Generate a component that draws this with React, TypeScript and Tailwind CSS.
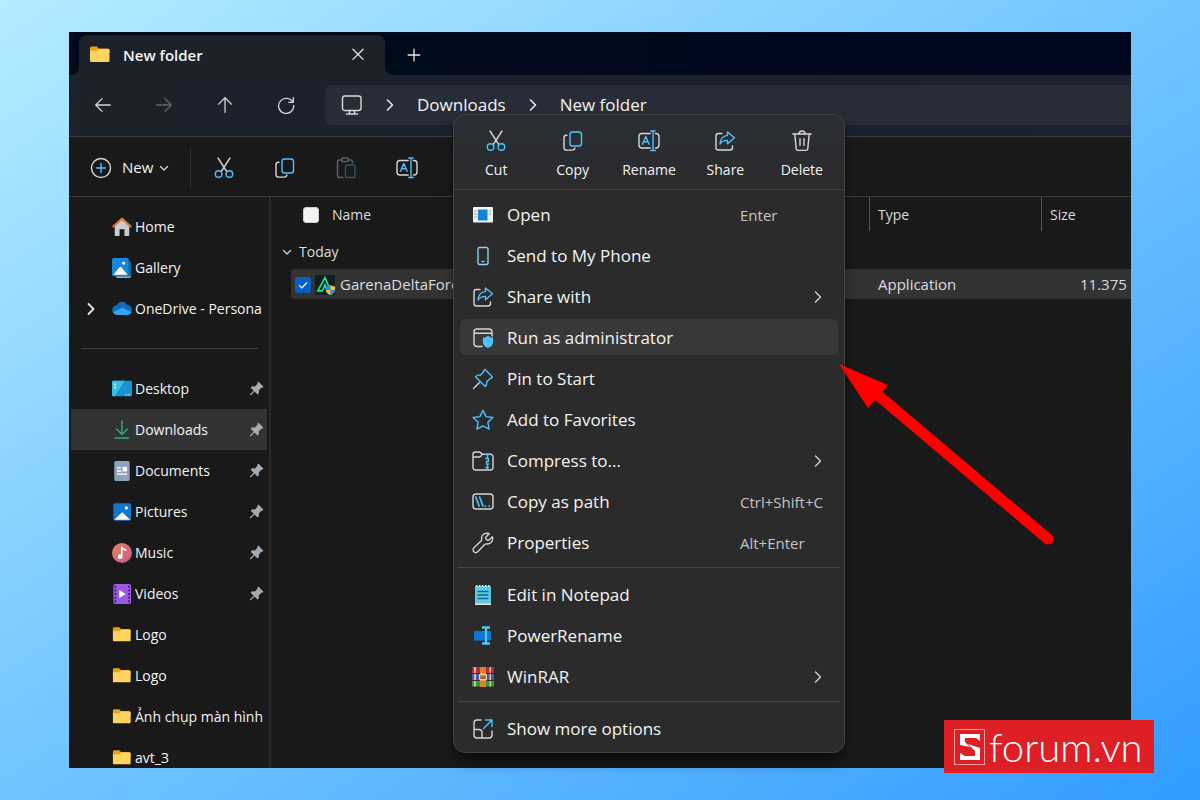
import type { ReactNode } from "react"

const BLUE = "#4cc2ff"

function Svg({ size = 22, children }: { size?: number; children: ReactNode }) {
  return (
    <svg
      width={size}
      height={size}
      viewBox="0 0 22 22"
      fill="none"
      stroke="#d6d6d6"
      strokeWidth="1.4"
      strokeLinecap="round"
      strokeLinejoin="round"
      className="shrink-0"
      aria-hidden="true"
    >
      {children}
    </svg>
  )
}

/* Line icons */

const CutIcon = () => (
  <Svg>
    <path d="M5 1l8.800 13.600M17 1L8.200 14.600" />
    <circle cx="5.600" cy="17" r="3.300" stroke={BLUE} />
    <circle cx="16.400" cy="17" r="3.300" stroke={BLUE} />
  </Svg>
)

const CopyIcon = () => (
  <Svg>
    <path d="M5 5.300H4.400A2.600 2.600 0 0 0 2 8v9.400a2.700 2.700 0 0 0 2.700 2.700h5.600a2.700 2.700 0 0 0 2.600-2.100" />
    <rect x="8" y="2" width="11.500" height="14" rx="2.500" stroke={BLUE} />
  </Svg>
)

const PasteIcon = () => (
  <Svg>
    <g stroke="#636363">
      <path d="M6.500 3H4a1.500 1.500 0 0 0-1.500 1.500v14.500A1.500 1.500 0 0 0 4 20.500h4M13.500 3H16a1.500 1.500 0 0 1 1.500 1.500v1" />
      <rect x="6.500" y="1" width="7" height="3.600" rx="1.800" />
    </g>
    <rect x="10.500" y="8" width="9.500" height="12.500" rx="1.500" stroke="#2c566b" />
  </Svg>
)

const RenameIcon = () => (
  <Svg>
    <path d="M12.200 3.500H4A3 3 0 0 0 1 6.500v8.500a3 3 0 0 0 3 3h8.200M17.500 3.500h.5a3 3 0 0 1 3 3v8.500a3 3 0 0 1-3 3h-.5" />
    <g stroke={BLUE}>
      <path d="M4.500 14.300L7.800 6.500l3.300 7.800M5.600 11.800h4.400" />
      <path d="M12.800 1h4.400M15 1v19.500M12.800 20.500h4.400" />
    </g>
  </Svg>
)

const ShareIcon = () => (
  <Svg>
    <path d="M8 3.500H4.500a2.500 2.500 0 0 0-2.500 2.500v11.500A2.500 2.500 0 0 0 4.500 20h11.500a2.500 2.500 0 0 0 2.500-2.500V16" />
    <path
      d="M13.500 2l7 5.800-7 5.900v-3.300c-3.500 0-5.700 1-7.500 3.600.4-4.700 3-8.100 7.500-8.600z"
      stroke={BLUE}
    />
  </Svg>
)

const TrashIcon = () => (
  <Svg>
    <path d="M1.800 4h18.400M8 4a3 3 0 0 1 6 0M3.800 4l1.400 14.600a2 2 0 0 0 2 1.800h7.600a2 2 0 0 0 2-1.800L18.200 4M9 8.800v6.400M13 8.800v6.400" />
  </Svg>
)

const PhoneIcon = () => (
  <Svg>
    <rect x="6" y="2.500" width="10" height="17" rx="1.800" stroke="#8fd0ea" />
    <path d="M9.800 16.500h2.400" stroke={BLUE} />
  </Svg>
)

const AdminIcon = () => (
  <Svg>
    <path d="M10 19.500H5a3 3 0 0 1-3-3V5a3 3 0 0 1 3-3h12a3 3 0 0 1 3 3v4M2 6.200h18" />
    <path
      d="M16 8.800c1.500 1.300 3.200 1.900 5.200 2v4c0 3-2 5-5.200 6.300-3.200-1.300-5.200-3.300-5.200-6.300v-4c2-.1 3.700-.7 5.200-2z"
      fill={BLUE}
      stroke="none"
    />
  </Svg>
)

const PinIcon = () => (
  <Svg>
    <path d="M7.300 14.700L1.500 20.500" />
    <path
      d="M13 1.500l7.500 7.500c-.4 1-1.300 1.500-2.500 1.600l-3.200 3.200c.2 1.900-.3 3.500-1.600 4.700L3.500 8.800c1.200-1.300 2.800-1.800 4.700-1.600L11.400 4c.1-1.200.6-2.100 1.600-2.500z"
      stroke={BLUE}
    />
  </Svg>
)

const StarIcon = () => (
  <Svg>
    <path
      d="M11 1.300l3 6.300 6.900.9-5 4.800 1.200 6.900-6.100-3.300-6.100 3.300 1.200-6.900-5-4.800 6.900-.9z"
      stroke={BLUE}
    />
  </Svg>
)

const CompressIcon = () => (
  <Svg>
    <path d="M1 7V4.500A2.500 2.500 0 0 1 3.500 2h3.300c1 0 1.700.4 2.200 1l1 1.200h8.500A2.500 2.500 0 0 1 21 6.700v10.800a2.500 2.500 0 0 1-2.500 2.500h-15A2.500 2.500 0 0 1 1 17.500zM1 7h6.500c1.200 0 1.700-.7 2.500-2.800" />
    <path d="M13.500 4.500h4M15.500 4.500v3M13.700 8.500h2.800v2.800h-2v2.700h2.200M15.500 14v3M13.700 17.500h2.800M15.500 17.500V20" stroke={BLUE} />
  </Svg>
)

const PathIcon = () => (
  <Svg>
    <rect x="1" y="3" width="20" height="15" rx="3" />
    <path d="M3.800 6l3.400 9M7.600 6L11 15M13.300 15h.3M17 15h.3" stroke={BLUE} strokeWidth="1.700" />
  </Svg>
)

const WrenchIcon = () => (
  <Svg>
    <path d="M15 1.200c-3.300-.2-6 2.700-5.300 6.200.1.500-.1 1-.4 1.300L2 15.800c-1.200 1.200-1.200 2.900-.1 4 1.100 1 2.900 1 4-.2l7-7.300c.4-.4.9-.5 1.400-.4 3.700.6 6.800-2.300 6.400-6.200l-.4-1-3.300 3.200c-.6.600-1.400.5-1.900 0l-1.100-1.100c-.5-.5-.5-1.300 0-1.900l3.200-3.200z" />
  </Svg>
)

const MoreIcon = () => (
  <Svg>
    <path d="M9 2H5a3 3 0 0 0-3 3v12a3 3 0 0 0 3 3h12a3 3 0 0 0 3-3v-4M2 11.500h5a3 3 0 0 1 3 3V20" />
    <path d="M13.500 2H20v6.500M20 2l-8.500 8.500" stroke={BLUE} />
  </Svg>
)

const Chevron = ({ dir, color = "#d6d6d6", width = 1.3 }: { dir: "right" | "down"; color?: string; width?: number }) => (
  <svg
    width="10"
    height="14"
    viewBox="0 0 10 14"
    fill="none"
    stroke={color}
    strokeWidth={width}
    strokeLinecap="round"
    strokeLinejoin="round"
    className="shrink-0"
    aria-hidden="true"
  >
    <path d={dir === "right" ? "M2.500 2L7.500 7l-5 5" : "M1.500 5.500L5 9l3.500-3.500"} />
  </svg>
)

/* Filled icons */

const FolderIcon = () => (
  <Svg>
    <path d="M1 4A1.500 1.500 0 0 1 2.500 2.500h5.300l2 2H18.500A2 2 0 0 1 20.500 6.500V9H1z" fill="#e8a317" stroke="none" />
    <path d="M1 6.800h7.500L10 5h9.200a1.300 1.300 0 0 1 1.300 1.300v10.400a1.300 1.300 0 0 1-1.300 1.300H2.300A1.300 1.300 0 0 1 1 16.700z" fill="#ffd45e" stroke="none" />
  </Svg>
)

const HomeIcon = () => (
  <Svg>
    <path d="M3 9.500L11 2.500l8 7v10.300a1.200 1.200 0 0 1-1.200 1.200h-4.100v-7.500H8.300V21H4.200A1.200 1.200 0 0 1 3 19.800z" fill="#c9cbce" stroke="none" />
    <path d="M1.500 10.500L11 1.800l9.500 8.700" stroke="#e0762f" strokeWidth="2.400" />
  </Svg>
)

const GalleryIcon = () => (
  <Svg>
    <path d="M19 4a2 2 0 0 1 2 2v14a2 2 0 0 1-2 2H6a2 2 0 0 1-2-2h15z" fill="#7db7ea" stroke="none" />
    <path d="M19 3.500a2 2 0 0 1 2 2V20h-3z" fill="#1668ae" stroke="none" />
    <rect x="0" y="0" width="18.500" height="20" rx="1.800" fill="#1686d9" stroke="none" />
    <path d="M1.500 18.500l7-8.500c.5-.5 1.100-.5 1.600 0l7 8.500z" fill="#fff" stroke="none" />
    <circle cx="12.800" cy="5.800" r="1.600" fill="#fff" stroke="none" />
  </Svg>
)

const OneDriveIcon = () => (
  <Svg>
    <path d="M5.500 7a6.200 6.200 0 0 1 11.200-.8c3 .3 5.300 2.400 5.300 5.300a5.500 5.500 0 0 1-5.500 5.500H5A5 5 0 0 1 5.500 7z" fill="#0f6cbd" stroke="none" />
    <path d="M1 14.300l10.500-4.800 10 4.800a5.200 5.200 0 0 1-5 3.200H5a5 5 0 0 1-4-3.200z" fill="#32a4ef" stroke="none" />
  </Svg>
)

const DesktopIcon = () => (
  <Svg>
    <rect x="0" y="2" width="22" height="17" rx="1.500" fill="#1b95d1" stroke="none" />
    <path d="M0 3.500A1.500 1.500 0 0 1 1.500 2H14L3 19H1.500A1.500 1.500 0 0 1 0 17.500z" fill="#35bfe3" stroke="none" />
    <path d="M2.500 5h2v2h-2zM2.500 8.500h2v2h-2z" fill="#d8f6ff" stroke="none" />
    <path d="M15 17.500h1.500M18 17.500h1.500" stroke="#bfe9ff" strokeWidth="1" />
  </Svg>
)

const DownloadIcon = () => (
  <Svg>
    <path d="M11 1v14.500M5 10l6 6 6-6M3.500 19.700h15" stroke="#2fa884" strokeWidth="1.600" />
  </Svg>
)

const DocumentIcon = () => (
  <Svg>
    <rect x="2.500" y="0" width="17" height="22" rx="1.800" fill="#8da3bd" stroke="none" />
    <path d="M5.500 7.500h4.500M5.500 11h4.500M5.500 14.500h11" stroke="#fff" strokeWidth="1.500" strokeLinecap="butt" />
    <rect x="11.500" y="6.500" width="5" height="5" fill="#fff" stroke="none" />
  </Svg>
)

const PicturesIcon = () => (
  <Svg>
    <rect x="1.500" y="1.500" width="19.500" height="19" rx="1.800" fill="#1278cf" stroke="none" />
    <path d="M2.500 19.500l7.800-7.500c.6-.5 1.300-.5 1.900 0l7.800 7.500z" fill="#fff" stroke="none" />
    <circle cx="15.800" cy="6.500" r="1.800" fill="#fff" stroke="none" />
  </Svg>
)

const MusicIcon = () => (
  <Svg>
    <defs>
      <linearGradient id="music" x1="0" y1="0" x2="1" y2="1">
        <stop offset="0" stopColor="#e8825a" />
        <stop offset="1" stopColor="#c25b8e" />
      </linearGradient>
    </defs>
    <circle cx="11" cy="11" r="11" fill="url(#music)" stroke="none" />
    <circle cx="9" cy="15" r="2.500" fill="#fff" stroke="none" />
    <path d="M10.700 15V4.800c1 2 3 2.200 4.300 3.200" stroke="#fff" strokeWidth="1.800" />
  </Svg>
)

const VideosIcon = () => (
  <Svg>
    <rect x="1.500" y="0" width="19.500" height="22" rx="1.800" fill="#9a5be0" stroke="none" />
    <path d="M3.800 2v19M18.700 2v19" stroke="#3f1c78" strokeWidth="2" strokeDasharray="2 2" strokeLinecap="butt" />
    <path d="M8 6.500l7 4.500-7 4.500z" fill="#fff" stroke="none" />
  </Svg>
)

const OpenIcon = () => (
  <Svg>
    <rect x="1" y="3" width="20" height="15.500" rx="1" fill="#f3f3f3" stroke="none" />
    <path d="M2 7h3M2 10h3M2 13h3M17 7h2.500M17 10h2.500" stroke="#9b9b9b" strokeWidth="1" strokeLinecap="butt" />
    <rect x="6" y="5.500" width="9.500" height="11" fill="#1083dc" stroke="none" />
  </Svg>
)

const NotepadIcon = () => (
  <Svg>
    <rect x="3" y="2" width="16" height="19" rx="1" fill="#5ccbe8" stroke="none" />
    <path d="M3 19.500h16V21H3z" fill="#e9e2d8" stroke="none" />
    <path d="M4 2h14" stroke="#c9f1fa" strokeWidth="2" strokeDasharray="1.500 1.500" strokeLinecap="butt" />
    <path d="M6 7.500h10M6 11h10M6 14.500h10" stroke="#14668a" strokeWidth="1.300" />
  </Svg>
)

const PowerRenameIcon = () => (
  <Svg>
    <rect x="2" y="6" width="17" height="9.500" rx="1" fill="#0f78d4" stroke="none" />
    <path d="M10 2.500h8M14 2.500v16M10 18.500h8" stroke="#55c5f5" strokeWidth="2.300" strokeLinecap="butt" />
  </Svg>
)

const WinRarIcon = () => (
  <Svg>
    <g stroke="none">
      <path d="M0 1h22v6H0z" fill="#b8274b" />
      <path d="M0 8h22v6H0z" fill="#4258c8" />
      <path d="M0 15h22v5.500H0z" fill="#2f9c46" />
      <path d="M2 1h2v6H2zM2 8h2v6H2zM2 15h2v5.500H2zM17.500 1h1.500v6h-1.500zM17.500 8h1.500v6h-1.500zM17.500 15h1.500v5.500h-1.500z" fill="#e6c067" />
      <path d="M8 1h6v20H8z" fill="#d9822b" />
      <rect x="7" y="7.500" width="8" height="7" rx="1.500" fill="#f3d58c" />
    </g>
    <path d="M9 9.500v2.700h4V9.500M11 9.500v2" stroke="#7c2c1e" strokeWidth="1.100" />
  </Svg>
)

const GameIcon = () => (
  <Svg size={20}>
    <rect x="0" y="0" width="22" height="22" fill="#0c2026" stroke="none" />
    <path d="M11 3L3 17.500h5L11 11l2 6h4z" stroke="#21e68c" strokeWidth="1.800" strokeLinejoin="miter" />
    <path d="M17 11c1.300 1 3 1.500 5 1.500v4c0 2.500-2 4.500-5 5.500-3-1-5-3-5-5.500v-4c2 0 3.700-.5 5-1.500z" fill="#f4c430" stroke="none" />
    <path d="M17 11v5.500h-5v-4c2 0 3.700-.5 5-1.500zM17 16.500h5c0 2.500-2 4.500-5 5.500z" fill="#2c87d8" stroke="none" />
  </Svg>
)

const SidebarPin = () => (
  <svg width="15" height="15" viewBox="0 0 15 15" className="shrink-0" aria-hidden="true">
    <path
      d="M9.300.5l5.200 5.200-1.300 1.100-.8-.1-2.600 2.700.1 2.800-1.400 1.300-3-3-3.900 4L.7 13.600l4-3.900-3-3L3 5.300l2.900.1L8.500 2.700 8.300 1.700z"
      fill="#a3abb3"
    />
  </svg>
)

const navButtons = [
  { label: "Back", icon: <path d="M19 11H3.500M10 4l-7 7 7 7" />, disabled: false },
  { label: "Forward", icon: <path d="M3 11h15.500M12 4l7 7-7 7" stroke="#62666e" />, disabled: true },
  { label: "Up", icon: <path d="M11 19V3M4 10l7-7 7 7" />, disabled: false },
  { label: "Refresh", icon: <path d="M18.500 8A8.300 8.300 0 1 0 19.500 11.500M19 3v5h-5" />, disabled: false },
]

const toolbar = [
  { label: "Cut", icon: <CutIcon /> },
  { label: "Copy", icon: <CopyIcon /> },
  { label: "Paste", icon: <PasteIcon /> },
  { label: "Rename", icon: <RenameIcon /> },
]

interface Place {
  label: string
  icon: ReactNode
  expandable?: boolean
  pinned?: boolean
  active?: boolean
}

const mainPlaces: Place[] = [
  { label: "Home", icon: <HomeIcon /> },
  { label: "Gallery", icon: <GalleryIcon /> },
  { label: "OneDrive - Persona", icon: <OneDriveIcon />, expandable: true },
]

const quickPlaces: Place[] = [
  { label: "Desktop", icon: <DesktopIcon />, pinned: true },
  { label: "Downloads", icon: <DownloadIcon />, pinned: true, active: true },
  { label: "Documents", icon: <DocumentIcon />, pinned: true },
  { label: "Pictures", icon: <PicturesIcon />, pinned: true },
  { label: "Music", icon: <MusicIcon />, pinned: true },
  { label: "Videos", icon: <VideosIcon />, pinned: true },
  { label: "Logo", icon: <FolderIcon /> },
  { label: "Logo", icon: <FolderIcon /> },
  { label: "Ảnh chụp màn hình", icon: <FolderIcon /> },
  { label: "avt_3", icon: <FolderIcon /> },
]

const quickActions = [
  { label: "Cut", icon: <CutIcon /> },
  { label: "Copy", icon: <CopyIcon /> },
  { label: "Rename", icon: <RenameIcon /> },
  { label: "Share", icon: <ShareIcon /> },
  { label: "Delete", icon: <TrashIcon /> },
]

interface MenuEntry {
  label: string
  icon: ReactNode
  shortcut?: string
  submenu?: boolean
  active?: boolean
}

const menuGroups: MenuEntry[][] = [
  [
    { label: "Open", icon: <OpenIcon />, shortcut: "Enter" },
    { label: "Send to My Phone", icon: <PhoneIcon /> },
    { label: "Share with", icon: <ShareIcon />, submenu: true },
    { label: "Run as administrator", icon: <AdminIcon />, active: true },
    { label: "Pin to Start", icon: <PinIcon /> },
    { label: "Add to Favorites", icon: <StarIcon /> },
    { label: "Compress to...", icon: <CompressIcon />, submenu: true },
    { label: "Copy as path", icon: <PathIcon />, shortcut: "Ctrl+Shift+C" },
    { label: "Properties", icon: <WrenchIcon />, shortcut: "Alt+Enter" },
  ],
  [
    { label: "Edit in Notepad", icon: <NotepadIcon /> },
    { label: "PowerRename", icon: <PowerRenameIcon /> },
    { label: "WinRAR", icon: <WinRarIcon />, submenu: true },
  ],
  [{ label: "Show more options", icon: <MoreIcon /> }],
]

function TitleBar() {
  return (
    <div className="flex h-[43px] shrink-0">
      <div className="w-[10px] rounded-br-lg bg-[#010a1b]" />
      <div className="w-[306px] bg-[#010a1b] pt-[3px]">
        <div className="flex h-10 items-center rounded-t-lg bg-[#1c212a] pr-4 pl-[10px]">
          <FolderIcon />
          <span className="ml-3 flex-1 text-[15px] font-semibold">New folder</span>
          <button type="button" aria-label="Close tab" className="flex size-[22px] items-center justify-center">
            <Svg size={16}>
              <path d="M4 3l14 14M18 3L4 17" stroke="#e6e6e6" strokeWidth="1.800" />
            </Svg>
          </button>
        </div>
      </div>
      <div className="flex flex-1 items-center rounded-bl-lg bg-linear-to-r from-[#000b1b] to-[#000820] pt-[3px] pl-[18px]">
        <button type="button" aria-label="New tab" className="flex size-[22px] items-center justify-center">
          <Svg size={16}>
            <path d="M11 3v16M3 11h16" stroke="#e6e6e6" strokeWidth="1.800" />
          </Svg>
        </button>
      </div>
    </div>
  )
}

function AddressBar() {
  return (
    <div className="flex h-[61px] shrink-0 items-center pb-[2px] pl-[3px]">
      {navButtons.map((b) => (
        <button key={b.label} type="button" aria-label={b.label} disabled={b.disabled} className="flex h-10 w-[61px] items-center justify-center">
          <Svg size={20}>{b.icon}</Svg>
        </button>
      ))}
      <nav aria-label="Path" className="ml-[9px] flex h-10 flex-1 items-center gap-[22px] rounded-l-md bg-[#272c36] pl-4 text-[17px]">
        <Svg>
          <rect x="1.500" y="2" width="18.500" height="14.500" rx="2.500" />
          <path d="M8.500 17v2.500M13.500 17v2.500M5.500 20h11" />
        </Svg>
        <Chevron dir="right" color="#e6e6e6" width={1.6} />
        <a href="#downloads">Downloads</a>
        <Chevron dir="right" color="#e6e6e6" width={1.6} />
        <a href="#new-folder">New folder</a>
      </nav>
    </div>
  )
}

function Toolbar() {
  return (
    <div className="flex h-[61px] shrink-0 items-center border-y border-[#3a3a3a] bg-[#191919] pt-[2px]">
      <button type="button" className="flex h-10 w-[121px] items-center pl-[21px] text-[15px]">
        <Svg>
          <circle cx="11" cy="11" r="9.500" />
          <path d="M11 6.500v9M6.500 11h9" stroke={BLUE} />
        </Svg>
        <span className="mr-[6px] ml-[10px]">New</span>
        <Chevron dir="down" />
      </button>
      <div className="mr-[2px] h-10 w-px bg-[#333]" />
      {toolbar.map((b) => (
        <button key={b.label} type="button" aria-label={b.label} className="flex h-10 w-[61px] items-center justify-center">
          {b.icon}
        </button>
      ))}
    </div>
  )
}

function PlaceRow({ place }: { place: Place }) {
  return (
    <li>
      <a
        href="#place"
        className={`mx-[2px] flex h-[41px] items-center text-sm ${place.active ? "bg-[#333]" : ""}`}
      >
        <span className="flex w-[41px] shrink-0 justify-center pr-[2px]">
          {place.expandable && <Chevron dir="right" color="#e6e6e6" width={1.8} />}
        </span>
        <span className="shrink-0 [&>svg]:size-5">{place.icon}</span>
        <span className="ml-[3px] min-w-0 flex-1 overflow-hidden whitespace-nowrap">{place.label}</span>
        {place.pinned && (
          <span className="mr-[3px]">
            <SidebarPin />
          </span>
        )}
      </a>
    </li>
  )
}

function Sidebar() {
  return (
    <aside className="w-[202px] shrink-0 overflow-hidden border-r-2 border-[#2a2a2a] pt-[9px]">
      <ul>
        {mainPlaces.map((p) => (
          <PlaceRow key={p.label} place={p} />
        ))}
      </ul>
      <hr className="mt-[19px] mr-[11px] mb-[19px] ml-3 border-[#3d3d3d]" />
      <ul>
        {quickPlaces.map((p, i) => (
          <PlaceRow key={i} place={p} />
        ))}
      </ul>
    </aside>
  )
}

function FileList() {
  return (
    <main className="min-w-0 flex-1 overflow-hidden">
      <table className="w-full table-fixed border-collapse text-left text-sm whitespace-nowrap text-[#dcdcdc]">
        <thead>
          <tr className="h-[37px]">
            <th className="p-0 align-top font-normal">
              <div className="flex h-[34px] items-center pt-[2px] pl-[32px]">
                <input type="checkbox" aria-label="Select all" className="size-4 appearance-none rounded-[3px] border border-[#ccc] bg-[#f3f3f3]" />
                <span className="ml-[13px]">Name</span>
              </div>
            </th>
            <th className="w-[172px] p-0 align-top font-normal">
              <div className="flex h-[34px] items-center border-l border-[#555] pt-[2px] pl-2">Type</div>
            </th>
            <th className="w-[90px] p-0 align-top font-normal">
              <div className="flex h-[34px] items-center border-l border-[#555] pt-[2px] pl-2">Size</div>
            </th>
          </tr>
        </thead>
        <tbody>
          <tr className="h-[35px]">
            <td colSpan={3} className="p-0">
              <button type="button" className="flex items-center gap-[7px] pl-[11px]">
                <Chevron dir="down" />
                Today
              </button>
            </td>
          </tr>
          <tr className="h-[30px] text-[15px]">
            <td className="p-0 pl-5">
              <div className="flex h-[30px] items-center rounded-l-sm bg-[#333] pt-[2px] pl-1">
                <span className="relative flex size-4 shrink-0">
                  <input
                    type="checkbox"
                    aria-label="GarenaDeltaForce"
                    defaultChecked
                    className="size-4 appearance-none rounded-[3px] bg-[#0a5fc4]"
                  />
                  <svg width="16" height="16" viewBox="0 0 16 16" fill="none" stroke="#fff" strokeWidth="1.200" className="pointer-events-none absolute inset-0">
                    <path d="M4 8.200l2.800 2.800L12 5.500" />
                  </svg>
                </span>
                <span className="mr-[5px] ml-1">
                  <GameIcon />
                </span>
                GarenaDeltaForce
              </div>
            </td>
            <td className="bg-[#333] p-0 pt-[2px] pl-[9px]">Application</td>
            <td className="bg-[#333] p-0 pt-[2px] pl-[39px]">11.375 KB</td>
          </tr>
        </tbody>
      </table>
    </main>
  )
}

function ContextMenu() {
  return (
    <div
      role="menu"
      className="absolute top-[82px] left-[384px] w-[392px] rounded-xl border border-[#414141] bg-[#2b2b2b] bg-linear-to-b from-[#2b2e36] to-[#2b2b2b] to-12% pb-[6px] shadow-lg shadow-black/50"
    >
      <div className="flex h-[75px] border-b border-[#434343] px-1">
        {quickActions.map((a) => (
          <button key={a.label} type="button" role="menuitem" className="flex flex-1 flex-col items-center gap-2 pt-[15px] text-sm">
            {a.icon}
            {a.label}
          </button>
        ))}
      </div>
      {menuGroups.map((group, i) => (
        <div
          key={i}
          className={`flex flex-col gap-[5px] ${i === 0 ? "mx-[6px] mt-[6px]" : "mx-1 mt-[7px] border-t border-[#434343] px-[2px] pt-2"}`}
        >
          {group.map((entry) => (
            <button
              key={entry.label}
              type="button"
              role="menuitem"
              className={`flex h-9 items-center rounded-md px-3 pt-[2px] text-left ${entry.active ? "bg-[#383838]" : ""}`}
            >
              {entry.icon}
              <span className="ml-[13px] flex-1 text-[17px]">{entry.label}</span>
              {entry.shortcut && <span className="w-[86px] text-[15px] whitespace-nowrap text-[#c4c4c4]">{entry.shortcut}</span>}
              {entry.submenu && (
                <span className="mr-[3px]">
                  <Chevron dir="right" />
                </span>
              )}
            </button>
          ))}
        </div>
      ))}
    </div>
  )
}

function PointerArrow() {
  return (
    <svg width="220" height="190" viewBox="0 0 220 190" className="pointer-events-none absolute top-[330px] left-[768px]" aria-hidden="true">
      <path d="M42 34L211 177" stroke="#fe0000" strokeWidth="11" strokeLinecap="round" />
      <path d="M2 2l49 21-20 23z" fill="#fe0000" />
    </svg>
  )
}

function SforumBadge() {
  return (
    <div className="absolute right-[46px] bottom-[27px] flex h-[53px] w-[210px] items-center bg-[#df1f26] pl-[10px] text-white">
      <svg width="31" height="36" viewBox="0 0 31 36" aria-hidden="true">
        <rect x="0.500" y="0.500" width="30" height="35" fill="none" stroke="#f3a0a0" />
        <path d="M6 5h20v7l-4-3H11v4l5 5-10-2z" fill="#fff" />
        <path d="M14 15l12 4v12H6v-7l5 3h10v-5z" fill="#fff" />
      </svg>
      <span className="ml-1 font-['Lato',sans-serif] text-[40px] leading-none font-light">forum.vn</span>
    </div>
  )
}

export default function App() {
  return (
    <div className="relative flex h-screen bg-linear-to-br from-[#b4ecff] via-[#71c4ff] to-[#2f9cff] px-[69px] py-8 font-['Open_Sans','Noto_Sans',sans-serif] text-[#f3f3f3]">
      <div className="relative flex min-w-0 flex-1">
        <div className="flex min-w-0 flex-1 flex-col overflow-hidden bg-linear-to-r from-[#1c212a] to-[#1c2030]">
          <TitleBar />
          <AddressBar />
          <Toolbar />
          <div className="flex min-h-0 flex-1 bg-[#191919]">
            <Sidebar />
            <FileList />
          </div>
        </div>
        <ContextMenu />
        <PointerArrow />
      </div>
      <SforumBadge />
    </div>
  )
}
